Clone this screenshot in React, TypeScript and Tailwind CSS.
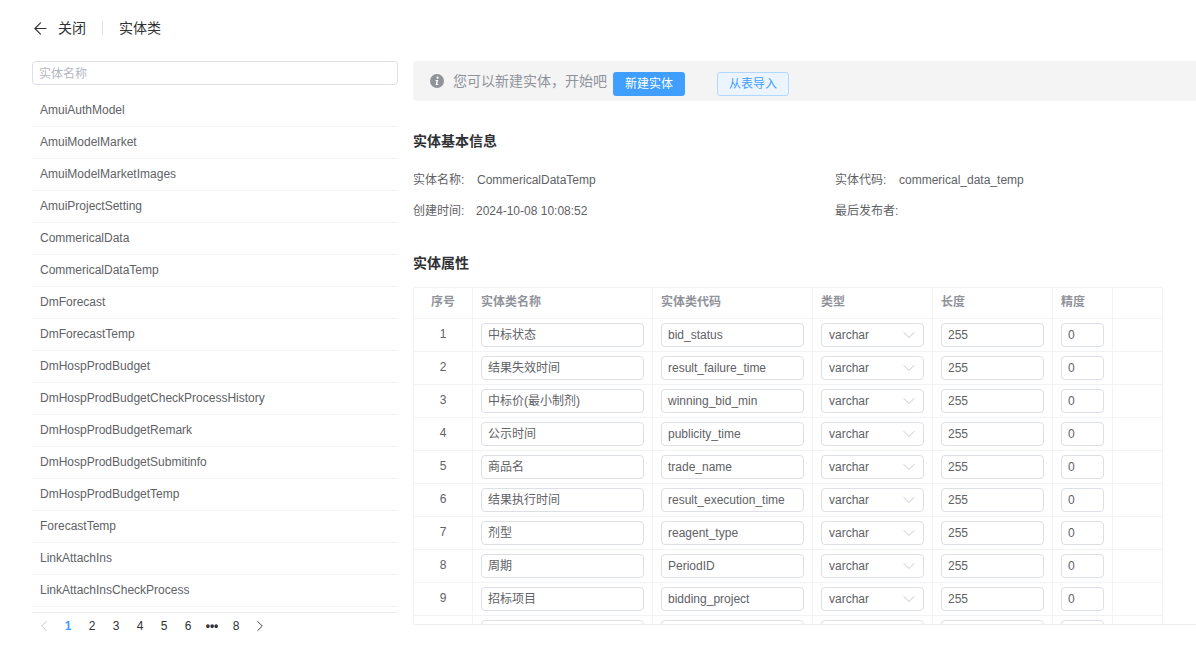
import { ArrowLeft, ChevronDown, ChevronLeft, ChevronRight } from "lucide-react";

const entities = [
  "AmuiAuthModel",
  "AmuiModelMarket",
  "AmuiModelMarketImages",
  "AmuiProjectSetting",
  "CommericalData",
  "CommericalDataTemp",
  "DmForecast",
  "DmForecastTemp",
  "DmHospProdBudget",
  "DmHospProdBudgetCheckProcessHistory",
  "DmHospProdBudgetRemark",
  "DmHospProdBudgetSubmitinfo",
  "DmHospProdBudgetTemp",
  "ForecastTemp",
  "LinkAttachIns",
  "LinkAttachInsCheckProcess",
];

const attrs = [
  { name: "中标状态", code: "bid_status", type: "varchar", length: "255", scale: "0" },
  { name: "结果失效时间", code: "result_failure_time", type: "varchar", length: "255", scale: "0" },
  { name: "中标价(最小制剂)", code: "winning_bid_min", type: "varchar", length: "255", scale: "0" },
  { name: "公示时间", code: "publicity_time", type: "varchar", length: "255", scale: "0" },
  { name: "商品名", code: "trade_name", type: "varchar", length: "255", scale: "0" },
  { name: "结果执行时间", code: "result_execution_time", type: "varchar", length: "255", scale: "0" },
  { name: "剂型", code: "reagent_type", type: "varchar", length: "255", scale: "0" },
  { name: "周期", code: "PeriodID", type: "varchar", length: "255", scale: "0" },
  { name: "招标项目", code: "bidding_project", type: "varchar", length: "255", scale: "0" },
  // only the top of this row shows above the fold
  { name: "", code: "", type: "", length: "", scale: "" },
];

const columns = [
  { title: "序号", width: "w-[59px]" },
  { title: "实体类名称", width: "w-[180px]" },
  { title: "实体类代码", width: "w-[160px]" },
  { title: "类型", width: "w-[120px]" },
  { title: "长度", width: "w-[120px]" },
  { title: "精度", width: "w-[60px]" },
  { title: "", width: "w-[50px]" },
];

function Field({ value, width }: { value: string; width: string }) {
  return (
    <div
      className={`${width} flex h-6 items-center rounded border border-[#dcdfe6] bg-white px-[6px] text-xs text-[#606266]`}
    >
      {value}
    </div>
  );
}

function InfoItem({ label, value, gap }: { label: string; value: string; gap: string }) {
  return (
    <div className="flex h-[31px] items-center text-xs text-[#606266]">
      <span className={gap}>{label}</span>
      <span>{value}</span>
    </div>
  );
}

export default function App() {
  return (
    <div className="h-[647px] w-[1196px] overflow-hidden bg-white font-['Liberation_Sans','Noto_Sans_CJK_SC',sans-serif] text-[#606266]">
      <div className="flex h-[61px] items-center pb-[5px] pl-[31px] text-sm text-[#303133]">
        <ArrowLeft size={19} strokeWidth={1.4} />
        <span className="ml-2">关闭</span>
        <div className="mx-4 h-[14px] w-px bg-[#dcdfe6]" />
        <span>实体类</span>
      </div>

      <div className="flex pl-[32px]">
        <aside className="flex h-[586px] w-[366px] shrink-0 flex-col">
          <div className="flex h-6 items-center rounded border border-[#dcdfe6] px-[6px] pt-px text-xs text-[#b4b8c0]">
            实体名称
          </div>
          <div className="mt-[10px] h-[518px] overflow-hidden border-b border-[#ebeef5]">
            <div className="flex flex-col">
              {entities.map((name) => (
                <div
                  key={name}
                  className="flex h-8 shrink-0 items-center border-b border-[#f2f3f5] pb-[2px] pl-2 text-xs text-[#606266]"
                >
                  {name}
                </div>
              ))}
            </div>
          </div>
          <div className="flex h-[26px] items-center text-xs text-[#303133]">
            <ChevronLeft size={18} strokeWidth={1.2} className="h-[18px] w-6 text-[#c0c4cc]" />
            <span className="w-6 text-center font-bold text-[#409eff]">1</span>
            <span className="w-6 text-center">2</span>
            <span className="w-6 text-center">3</span>
            <span className="w-6 text-center">4</span>
            <span className="w-6 text-center">5</span>
            <span className="w-6 text-center">6</span>
            <span className="w-6 text-center font-bold leading-none">•••</span>
            <span className="w-6 text-center">8</span>
            <ChevronRight size={18} strokeWidth={1.2} className="h-[18px] w-6" />
          </div>
        </aside>

        <main className="ml-[15px] flex h-[564px] min-w-0 flex-1 flex-col overflow-hidden">
          <div className="flex h-10 shrink-0 items-center rounded-l bg-[#f4f4f5] pl-[17px]">
            <svg viewBox="0 0 14 14" className="h-[14px] w-[14px]">
              <circle cx="7" cy="7" r="7" fill="#909399" />
              <circle cx="7.6" cy="3.7" r="1.1" fill="#fff" />
              <path d="M5.6 6h2.6l-.9 4.1h1v.9H5.6l.9-4.1h-.9z" fill="#fff" />
            </svg>
            <span className="ml-[9px] text-sm text-[#909399]">您可以新建实体，开始吧</span>
            <div className="mt-[6px] ml-[6px] flex h-6 w-[72px] items-center justify-center rounded-[3px] bg-[#409eff] text-xs text-white">
              新建实体
            </div>
            <div className="mt-[6px] ml-8 flex h-6 w-[72px] items-center justify-center rounded-[3px] border border-[#b3d8ff] bg-[#ecf5ff] text-xs text-[#409eff]">
              从表导入
            </div>
          </div>

          <h2 className="mt-[30px] text-sm leading-[20px] font-bold text-[#303133]">实体基本信息</h2>

          <div className="mt-[13px] grid grid-cols-[422px_1fr]">
            <InfoItem label="实体名称:" value="CommericalDataTemp" gap="w-[64px]" />
            <InfoItem label="实体代码:" value="commerical_data_temp" gap="w-[64px]" />
            <InfoItem label="创建时间:" value="2024-10-08 10:08:52" gap="w-[63px]" />
            <InfoItem label="最后发布者:" value="" gap="w-[64px]" />
          </div>

          <h2 className="mt-[27px] text-sm leading-[20px] font-bold text-[#303133]">实体属性</h2>

          <div className="mt-[14px] min-h-0 flex-1 overflow-hidden">
            <table className="w-[749px] table-fixed border-collapse border-t border-l border-[#f2f3f5]">
              <thead>
                <tr className="h-[31px]">
                  {columns.map((col, i) => (
                    <th
                      key={i}
                      className={`${col.width} border-r border-b border-[#f2f3f5] px-2 pb-[2px] text-xs font-bold text-[#909399] ${i === 0 ? "text-center" : "text-left"}`}
                    >
                      {col.title}
                    </th>
                  ))}
                </tr>
              </thead>
              <tbody>
                {attrs.map((attr, i) => (
                  <tr key={i} className="h-[33px]">
                    <td className="border-r border-b border-[#f2f3f5] pb-[3px] text-center text-xs text-[#606266]">
                      {attr.name ? i + 1 : ""}
                    </td>
                    <td className="border-r border-b border-[#f2f3f5] px-2">
                      <Field value={attr.name} width="w-[163px]" />
                    </td>
                    <td className="border-r border-b border-[#f2f3f5] px-2">
                      <Field value={attr.code} width="w-[143px]" />
                    </td>
                    <td className="border-r border-b border-[#f2f3f5] px-2">
                      <div className="flex h-6 w-[103px] items-center justify-between rounded border border-[#dcdfe6] bg-white pr-1 pl-[7px] text-xs text-[#606266]">
                        {attr.type}
                        <ChevronDown size={20} strokeWidth={0.8} className="text-[#a8abb2]" />
                      </div>
                    </td>
                    <td className="border-r border-b border-[#f2f3f5] px-2">
                      <Field value={attr.length} width="w-[103px]" />
                    </td>
                    <td className="border-r border-b border-[#f2f3f5] px-2">
                      <Field value={attr.scale} width="w-[43px]" />
                    </td>
                    <td className="border-r border-b border-[#f2f3f5]" />
                  </tr>
                ))}
              </tbody>
            </table>
          </div>
          <div className="h-px shrink-0 bg-[#ebeef5]" />
        </main>
      </div>
    </div>
  );
}
